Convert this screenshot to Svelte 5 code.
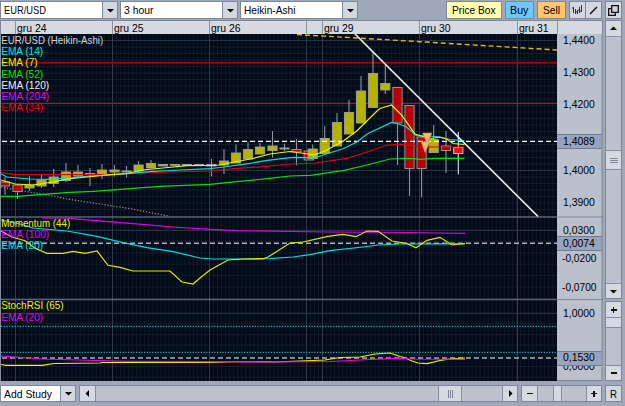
<script>
  const days = [
    [15.5, 'gru 24'], [112.5, 'gru 25'], [209.5, 'gru 26'], [306.5, ''],
    [322.5, 'gru 29'], [419.5, 'gru 30'], [517.5, 'gru 31']
  ];
  const headCells = days.map(([x, name], i) => ({ name, w: (i < 6 ? days[i + 1][0] : 557) - x }));

  // centre, body top, body bottom, high, low, kind
  const candles = [
    [5, 182, 186, 177, 195, 'r'], [17.5, 185, 191.5, 184, 199, 'r'],
    [29.5, 185, 188, 176, 191, 'y'], [41.5, 180, 186, 175, 188, 'y'],
    [53.7, 177, 183.5, 169, 187, 'y'], [66, 172, 180.5, 163, 182, 'y'],
    [78, 172, 176, 165, 178, 'y'], [90, 173.5, 174.5, 168, 186, 'g'],
    [102, 170, 174.5, 164, 179, 'y'], [114.5, 170, 172, 165, 176.5, 'y'],
    [126.5, 171, 172, 166, 177.5, 'g'], [138.6, 165, 171, 161, 172, 'y'],
    [151, 163.5, 168, 160, 168, 'y'], [163, 164.5, 166, 164, 166, 'y'],
    [175, 164.5, 165.3, 164, 166, 'g'], [187, 164.5, 165.3, 164, 166, 'g'],
    [199, 164.5, 165.3, 164, 166, 'g'], [211.5, 164.5, 166, 159, 176.5, 'g'],
    [224, 161, 165, 149, 174, 'y'], [236, 153, 163, 144.5, 163, 'y'],
    [248, 149.5, 159, 142, 159, 'y'], [260, 147, 154, 143, 154, 'y'],
    [272.5, 146, 150.5, 131, 157.5, 'y'], [284.5, 148, 149, 143.5, 151, 'g'],
    [296.5, 149.5, 152, 139, 165.5, 'r'], [308.7, 151, 160, 151, 160, 'r'],
    [312.7, 149, 158.5, 144.5, 158, 'y'], [324.7, 138.5, 153.5, 126, 153, 'y'],
    [337, 122.5, 146, 113, 146, 'y'], [349, 112.5, 134, 100, 134, 'y'],
    [361, 91, 123, 76, 123, 'y'], [373, 73.5, 107.5, 51, 107, 'y'],
    [385.3, 83.5, 90, 65, 94, 'y'], [397.5, 87.5, 123, 88, 165, 'r'],
    [409.5, 105.5, 168.5, 106, 196, 'r'], [421.6, 137, 168.5, 137, 197.5, 'r'],
    [433.7, 139.5, 152.5, 125, 152, 'y'], [446, 146, 150.5, 131, 173, 'r'],
    [458.3, 147.5, 153.5, 132, 174.5, 'b']
  ];
  const body = { y: '#b4b400', r: '#b40006', g: '#a0a098', b: '#ff0a0a' };

  const lines = [
    ['#00e010', '1,196.3 17,196.3 53,193.7 70,192.3 93,191.3 117,189.7 160,186.3 210,184.3 237,181.7 267,178.7 290,176 310,175.3 343,170.7 367,165 390,159 410,158.3 420,159.3 435,158.3 464.5,158.3'],
    ['#dc0008', '1,172.7 13,174.3 83,174.7 117,174.3 140,173 187,171.5 210,171 233,168.7 263,166.7 290,164 315,163 347,158.3 367,152 387,145.3 397,144.3 410,144.3 420,147 464.5,147'],
    ['#00dede', '1,174 7,177 30,179 50,179.3 73,177.7 90,176 110,175 130,173.3 150,171.7 180,170 210,168.7 220,167.5 250,163.3 267,160.3 293,157.3 315,157.7 330,152.7 343,148.7 357,142 367,134 391.5,122.5 399,124 406.5,127 416.5,135.7 436.5,136.5 450,139.5 464.5,140.7'],
    ['#f0f000', '1,180 15,184 33,185 53,182 67,179 87,177 110,174.7 127,173.5 143,170 163,168 187,165.7 210,165.5 220,165 237,161.5 253,158.5 270,154 290,151.5 315,155 325,150.7 342,142 357,130.7 377,111 380,108.5 391.5,105 401.5,115 415,134 423,136.5 431.5,138.5 440,137 446.5,139 453,143.5 464.5,144.5'],
    ['#e000e0', '42,217.8 63,217.8 93,220.3 133,223.7 173,227 210,229.3 237,230.7 325,232 410,232.5 434,233 465,233.3'],
    ['#00dede', '1,220 20,224 33,228 67,231 97,236.3 123,242.7 147,247.7 173,251.7 200,258 213,259 240,259 270,258.7 293,257 310,254.7 330,250.7 363,247 378,245 400,244 465,243.8'],
    ['#e6e600', '1,231 12,237 25,240.7 35,248.3 47,253.3 63,253.3 73,251.3 85,253.3 97,251 108,265.3 120,267.3 133,271 170,271 182,282 193,284 200,278 210,270 228,260 243,259 263,258.7 268,257 290,243 303,242 328,236.3 343,234.3 356,236.7 367,231 378,231.3 392,241 407,243.5 416,247.7 427,240.3 440,237.3 452,245 465,243.5'],
    ['#f0f000', '1,364.5 6,365.3 42,365.3 54,363.5 100,363 103,362.5 210,362.3 240,361.5 275,362 300,361 325,360 340,357.5 360,357 375,354 390,353 400,356.5 404,357.5 412,361 418,363 427,363.7 440,360.5 450,359 465,358'],
    ['#f000f0', '1,356 15,357 30,358 42,359 78,360 127,361.3 210,361.7 270,362 330,361.5 370,359.5 400,358.3 412,359 465,359.3']
  ];
  const vGrid = Array.from({ length: 137 }, (_, i) => 3.4 + i * 4.04);
  const hGrid = [
    ...Array.from({ length: 27 }, (_, i) => 40.5 + i * 6.5),
    ...Array.from({ length: 7 }, (_, i) => 230 + i * 11.4),
    ...Array.from({ length: 7 }, (_, i) => 313 + i * 10.7)
  ];

  const legend = [
    ['EUR/USD (Heikin-Ashi)', 44, 102, '#d0d4d8'], ['EMA (14)', 55.2, 42, '#00e8e8'],
    ['EMA (7)', 66.4, 36.5, '#f0f000'], ['EMA (52)', 77.5, 42, '#00e800'],
    ['EMA (120)', 88.7, 48, '#f0f0f0'], ['EMA (204)', 100, 48, '#e800e8'],
    ['EMA (34)', 111, 42, '#f00000'], ['Momentum (44)', 227, 69, '#f0f000'],
    ['EMA (100)', 238, 48, '#e800e8'], ['EMA (20)', 249.3, 42, '#00e8e8'],
    ['StochRSI (65)', 309, 62.5, '#f0f000'], ['EMA (20)', 320.5, 42, '#e800e8']
  ];
  const scale = [
    ['1,4400', 44], ['1,4300', 75.7], ['1,4200', 108.3], ['1,4100', 141.5],
    ['1,4000', 174], ['1,3900', 206.3], ['0,0300', 234], ['-0,0200', 262.3],
    ['-0,0700', 291.2], ['1,0000', 316.5], ['0,0000', 370]
  ];
  const current = [['1,4089', 134.5, 145.2], ['0,0074', 236.5, 246.8], ['0,1530', 351.5, 361.3]];
</script>

{#snippet label(text, w)}
  <svg class="label" width={w} height="14"><text x="0" y="11" textLength={w} lengthAdjust="spacingAndGlyphs">{text}</text></svg>
{/snippet}

{#snippet arrow(dir)}
  <svg width="9" height="9" class="arrow {dir}"><path d="M1 3H8L4.5 6.5Z" /></svg>
{/snippet}

{#snippet combo(text, w, total)}
  <div class="combo" style:width="{total}px">
    <span class="value">{@render label(text, w)}</span>
    <span class="drop">{@render arrow('down')}</span>
  </div>
{/snippet}

<div class="app">
  <div class="toolbar">
    {@render combo('EUR/USD', 42, 118)}
    {@render combo('3 hour', 29.5, 118)}
    {@render combo('Heikin-Ashi', 51.5, 118)}
    <div class="actions">
      <button class="price">{@render label('Price Box', 43.5)}</button>
      <button class="buy">{@render label('Buy', 18.5)}</button>
      <button class="sell">{@render label('Sell', 17)}</button>
      <div class="tools">
        <span><svg width="13" height="13"><path d="M2.5 3V9M4.5 5V10M6.5 6V10M8.5 3V9M10.5 1V8" fill="none" stroke="#333" /><path d="M1 4h1M5 8h1M7 6h1M9 7h1" stroke="#333" /></svg></span>
        <span><svg width="13" height="13"><path d="M3 10L10 3" stroke="#111" stroke-width="1.4" /></svg></span>
      </div>
      <button class="pop"><svg width="13" height="13" fill="none" stroke="#111" stroke-width="1.3"><path d="M4.7 1.7H11.3V8.3H4.7Z" /><path d="M4 4.7H1.7V11.3H8.3V9" /></svg></button>
    </div>
  </div>

  <div class="main">
    <div class="chart">
      <div class="dates">
        <span class="lead"></span>
        {#each headCells as cell}
          <span class="date" style:width="{cell.w}px">{#if cell.name}{@render label(cell.name, 29.5)}{/if}</span>
        {/each}
        <span class="corner"></span>
      </div>
      <svg class="plot" width="603" height="347" viewBox="0 34 603 347">
        <rect x="0" y="34" width="1" height="347" fill="#848c9c" />
        <rect x="1" y="34" width="556" height="347" fill="#000a18" />
        {#each vGrid as x}<path d="M{x} 34V381" stroke="#121b29" stroke-width=".9" />{/each}
        {#each hGrid as y}<path d="M1 {y}H557" stroke="#141e2c" stroke-width=".9" />{/each}
        {#each [40.5, 170.5, 230.5, 313.5] as y}<path d="M1 {y}H557" stroke="#263240" />{/each}
        {#each days as [x]}<path d="M{x} 34V381" stroke="#303b48" />{/each}

        <path d="M1 62.7H557" stroke="#9c0008" stroke-width="2" />
        <path d="M1 103.3H557" stroke="#96202a" stroke-width="1.3" />
        <path d="M297 34.5L400 40.5L557 50" stroke="#e0b810" stroke-width="1.4" stroke-dasharray="5 3" fill="none" />
        <path d="M1 187L17 190L37 193.3L57 196.7L67 199L100 204L130 208.7L170 216.3" stroke="#b88c8c" stroke-width="1.2" stroke-dasharray="1.2 1.8" fill="none" />

        {#each candles as [c, t, b, h, l, k]}
          <path d="M{c} {h}V{l}" stroke={k === 'b' ? '#e4e4e4' : '#92969c'} stroke-width="1.1" />
          <rect x={c - 4.6} y={t} width="9.2" height={b - t} fill={body[k]} stroke={k === 'b' ? '#ffd0d0' : '#a0a098'} stroke-width=".9" />
        {/each}

        <path d="M1 217H603M1 299.5H603" stroke="#5a6470" stroke-width="1.5" />
        <path d="M2 141.4H557" stroke="#fff" stroke-width="1.2" stroke-dasharray="5 3" />
        <path d="M2 243.3H557M2 358H557" stroke="#a8b2bc" stroke-width="1.5" stroke-dasharray="5 3" />
        <path d="M1 326.4H557M1 352.4H557" stroke="#10b8bc" stroke-width="1.2" stroke-dasharray="1.2 1.5" />
        {#each lines as [color, points]}
          <polyline {points} stroke={color} stroke-width="1.2" fill="none" />
        {/each}
        <path d="M355 34L538 216.5" stroke="#f0f0f0" stroke-width="1.6" />
        <path d="M421 141.5H430L425 152.5Z" fill="#f8b860" stroke="#c89050" stroke-width=".5" />
        <path d="M422.5 133H432L427 143Z" fill="#f8b860" stroke="#c89050" stroke-width=".5" />

        {#each legend as [text, y, w, color]}
          <text x="1.2" {y} textLength={w} lengthAdjust="spacingAndGlyphs" fill={color}>{text}</text>
        {/each}

        <rect x="557" y="34" width="45" height="347" fill="#bac0cc" />
        {#each scale as [text, y]}
          <text x={text[0] === '-' ? 562 : 563} {y} textLength={text[0] === '-' ? 34.5 : 31.8} lengthAdjust="spacingAndGlyphs">{text}</text>
        {/each}
        <path d="M557 217H602M557 299.5H602" stroke="#808a98" />
        {#each current as [text, top, y]}
          <rect x="557" y={top} width="45" height="14" fill="#98a3bd" />
          <path d="M557 {top}H602M557 {top + 14}H602" stroke="#717c90" />
          <text x="563" {y} textLength="31.8" lengthAdjust="spacingAndGlyphs">{text}</text>
        {/each}
        <path d="M602 34V380.5H557" stroke="#7c8696" fill="none" />
      </svg>
    </div>

    <div class="rail">
      <div class="bar tall">
        <span class="btn">{@render arrow('up')}</span>
        <span class="track" style:height="114px"></span>
        <span class="thumb grip"><i></i><i></i><i></i></span>
        <span class="track fill"></span>
        <span class="btn">{@render arrow('down')}</span>
      </div>
      <div class="bar short">
        <span class="btn plus"></span>
        <span class="thumb" style:height="10px"></span>
        <span class="track fill"></span>
        <span class="btn minus"></span>
      </div>
    </div>
  </div>

  <div class="footer">
    {@render combo('Add Study', 48, 76)}
    <div class="hbar scroll">
      <span class="btn">{@render arrow('left')}</span>
      <span class="track fill"></span>
      <span class="thumb grip"><i></i><i></i><i></i></span>
      <span class="track" style:width="41px"></span>
      <span class="btn">{@render arrow('right')}</span>
    </div>
    <div class="hbar zoom">
      <span class="btn minus"></span>
      <span class="track" style:width="16px"></span>
      <span class="thumb" style:width="8px"></span>
      <span class="track fill"></span>
      <span class="btn plus"></span>
    </div>
    <button class="reset">{@render label('R', 7)}</button>
  </div>
</div>

<style>
  :global(body) { margin: 0; }
  .app { width: 625px; height: 406px; background: #9fa8b9; overflow: hidden; font: 11px "Liberation Sans", Arial, sans-serif; display: flex; flex-direction: column; }
  .app * { box-sizing: border-box; }
  svg { display: block; flex: none; }
  svg text { font: 11px "Liberation Sans", Arial, sans-serif; }
  .label { overflow: visible; }
  button { font: inherit; margin: 0; padding: 0; display: flex; align-items: center; justify-content: center; border: 1px solid #7d8797; background: #d3d7e0; }
  .toolbar { height: 20px; padding: 1px 3px 1px 0; display: flex; gap: 2px; flex: none; }
  .combo { height: 18px; display: flex; border: 1px solid #7d8797; background: #fff; flex: none; }
  .value { flex: 1; padding: 0 0 0 3px; display: flex; align-items: center; }
  .drop { width: 15px; border-left: 1px solid #7d8797; background: #d3d7e0; display: flex; align-items: center; justify-content: center; }
  .arrow.up { transform: rotate(180deg); }
  .arrow.left { transform: rotate(90deg); }
  .arrow.right { transform: rotate(-90deg); }
  .actions { margin-left: auto; display: flex; gap: 3px; }
  .price { width: 56px; background: #ffffac; }
  .buy { width: 29px; background: #6cc8ff; }
  .sell { width: 29px; background: #ffc66c; }
  .tools { width: 33px; border: 1px solid #7d8797; background: #d3d7e0; display: flex; }
  .tools span { flex: 1; display: flex; align-items: center; justify-content: center; }
  .tools span + span { border-left: 1px solid #7d8797; }
  .pop { width: 17px; }
  .main { display: flex; gap: 2px; height: 361px; flex: none; }
  .chart { width: 603px; }
  .dates { height: 14px; display: flex; border: 1px solid #7d8797; border-bottom: 0; background: #d5d9e2; }
  .lead { width: 14px; }
  .date { border-left: 1px solid #8993a3; padding-left: 1px; flex: none; display: flex; align-items: center; }
  .corner { border-left: 1px solid #8993a3; flex: 1; }
  .rail { width: 17px; display: flex; flex-direction: column; gap: 2px; }
  .bar, .hbar { display: flex; border: 1px solid #7d8797; background: #bbc1cd; }
  .bar { flex-direction: column; }
  .tall { height: 280px; }
  .short { height: 80px; }
  .fill { flex: 1; }
  .track { background: #bbc1cd; }
  .btn, .thumb { background: #d5d9e2; display: flex; align-items: center; justify-content: center; flex: none; position: relative; }
  .bar .btn { height: 15px; }
  .hbar .btn { width: 15px; }
  .bar > * + * { border-top: 1px solid #848e9e; }
  .hbar > * + * { border-left: 1px solid #848e9e; }
  .grip { gap: 1px; }
  .bar .grip { height: 19px; flex-direction: column; }
  .hbar .grip { width: 23px; }
  .bar i { width: 8px; height: 1px; background: #7d8797; }
  .hbar i { width: 1px; height: 8px; background: #7d8797; }
  .minus::before, .plus::before { content: ''; width: 6px; height: 1.6px; background: #111; }
  .plus::after { content: ''; position: absolute; width: 1.6px; height: 6px; background: #111; }
  .footer { display: flex; gap: 3px; padding: 4px 3px 0 0; height: 22px; flex: none; }
  .hbar { height: 17px; }
  .scroll { width: 441px; }
  .zoom { width: 81px; }
  .footer .combo, .reset { height: 17px; }
  .reset { width: 17px; margin-left: auto; }
</style>
